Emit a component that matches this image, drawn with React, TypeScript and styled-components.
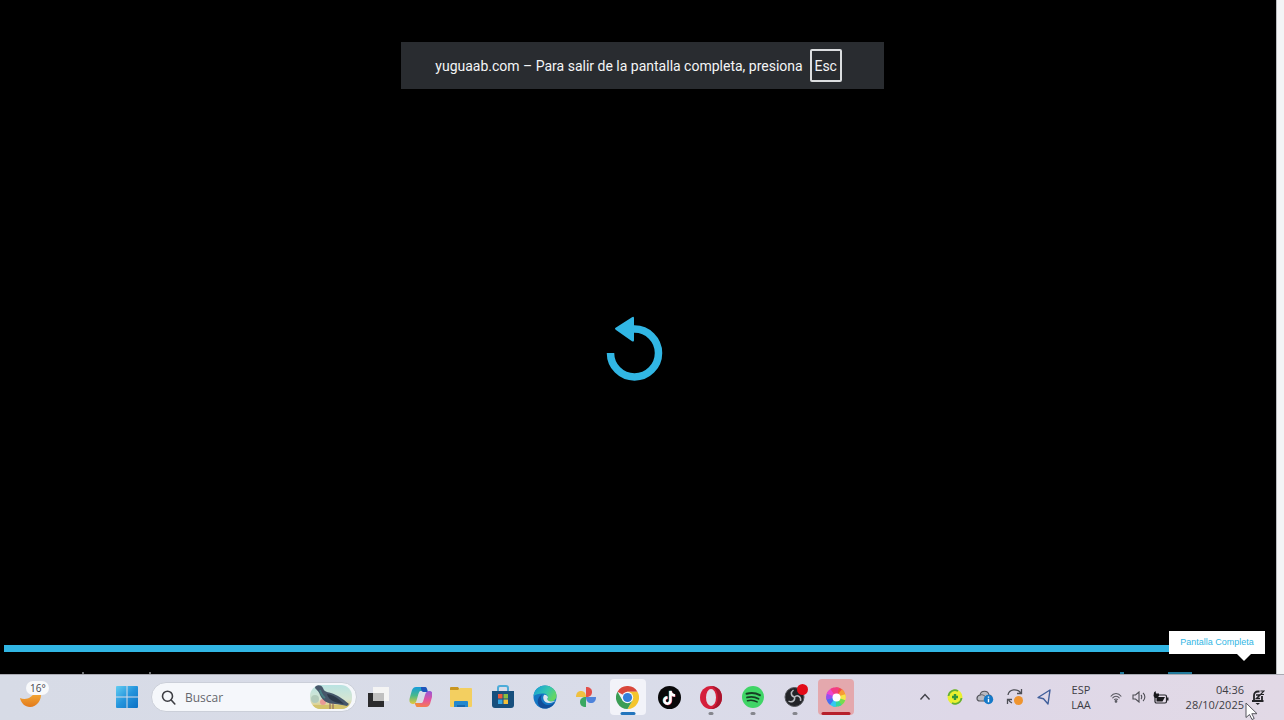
import React from "react";
import styled, { createGlobalStyle } from "styled-components";

const GlobalStyle = createGlobalStyle`
  * { box-sizing: border-box; }
  body { margin: 0; background: #000; overflow: hidden; font-family: "Open Sans", "Noto Sans", sans-serif; }
  button { border: 0; padding: 0; background: none; font: inherit; color: inherit; cursor: pointer; }
  svg { display: block; }
`;

const accent = "#31b6e4";

const Screen = styled.div`
  position: relative;
  display: flex;
  flex-direction: column;
  height: 100vh;
`;

const Stage = styled.main`
  flex: 1;
  min-height: 0;
  display: flex;
`;

const Gutter = styled.div`
  width: 8px;
  background: #f3f4f6;
  border-left: 1px solid #b9bbbf;
`;

const Player = styled.section`
  flex: 1;
  display: flex;
  flex-direction: column;
  align-items: center;
  background: #000;
`;

const Notice = styled.div`
  display: flex;
  align-items: center;
  justify-content: center;
  gap: 7px;
  width: 483px;
  height: 47px;
  margin: 42px 0 0 8px;
  padding-right: 7px;
  background: #292c30;
  color: #f4f5f6;
  font-family: Roboto, "Open Sans", sans-serif;
  font-size: 14px;
  line-height: 20px;
  white-space: nowrap;
`;

const Key = styled.kbd`
  display: grid;
  place-items: center;
  width: 32px;
  height: 33px;
  border: 2px solid #dcdee0;
  border-radius: 2px;
  font: inherit;
`;

const Center = styled.div`
  flex: 1;
  display: grid;
  place-items: center;
  padding-bottom: 36px;
`;

const Timeline = styled.div`
  position: relative;
  align-self: stretch;
  padding-left: 4px;
  margin-bottom: 20px;
`;

const Progress = styled.div`
  height: 7px;
  background: ${accent};
  margin-right: 104px;
`;

const Tooltip = styled.div`
  position: absolute;
  right: 11px;
  bottom: -2px;
  width: 96px;
  height: 23px;
  background: #fff;
  color: ${accent};
  font: 9px/22px "Liberation Sans", Arial, sans-serif;
  text-align: center;
  white-space: nowrap;
  &::after {
    content: "";
    position: absolute;
    top: 100%;
    right: 14px;
    border: 7px solid transparent;
    border-top-color: #fff;
    border-bottom: 0;
  }
`;

const ControlsEdge = styled.div`
  align-self: stretch;
  display: flex;
  justify-content: space-between;
  height: 2px;
  padding: 0 84px 0 82px;
`;

const EdgeGroup = styled.div<{ $gap: number }>`
  display: flex;
  gap: ${(p) => p.$gap}px;
`;

const EdgeMark = styled.span<{ $w: number; $c: string }>`
  width: ${(p) => p.$w}px;
  background: ${(p) => p.$c};
`;

const Taskbar = styled.footer`
  display: flex;
  align-items: center;
  height: 46px;
  padding: 0 12px 1px 16px;
  border-top: 1px solid #a9aab2;
  background: linear-gradient(90deg, #d7dbe6 0%, #d9dce9 50%, #ded8e8 75%, #e2d9e6 100%);
  color: #3d3d44;
  font-size: 11px;
  line-height: 15px;
`;

const Weather = styled.button`
  width: 36px;
  height: 36px;
  margin-right: 54px;
`;

const StartButton = styled.button`
  display: grid;
  place-items: center;
  width: 42px;
  height: 36px;
  margin-right: 3px;
`;

const Search = styled.label`
  display: flex;
  align-items: center;
  gap: 9px;
  width: 206px;
  height: 30px;
  padding: 0 4px 0 9px;
  border: 1px solid #cbcfd9;
  border-radius: 15px;
  background: #f5f7fb;
`;

const SearchInput = styled.input`
  flex: 1;
  min-width: 0;
  border: 0;
  padding: 0;
  outline: 0;
  background: none;
  font: inherit;
  font-size: 12px;
  &::placeholder { color: #66676d; opacity: 1; }
`;

const Apps = styled.nav`
  display: flex;
  width: 500px;
`;

const AppSlot = styled.div`
  flex: 1;
  display: flex;
  justify-content: center;
`;

type Run = "none" | "idle" | "active" | "alert";
const tile: Record<Run, string> = { none: "none", idle: "none", active: "#f2f3f9", alert: "#e4a8ad" };
const mark: Record<Run, string> = { none: "transparent", idle: "#85868d", active: "#2375bd", alert: "#b71f2b" };
const markWidth: Record<Run, number> = { none: 0, idle: 5, active: 15, alert: 29 };

const AppButton = styled.button<{ $run: Run }>`
  position: relative;
  display: grid;
  place-items: center;
  width: 36px;
  height: 36px;
  border-radius: 4px;
  background: ${(p) => tile[p.$run]};
  &::after {
    content: "";
    position: absolute;
    bottom: 0;
    left: 50%;
    transform: translateX(-50%);
    width: ${(p) => markWidth[p.$run]}px;
    height: 3px;
    border-radius: 2px;
    background: ${(p) => mark[p.$run]};
  }
`;

const Tray = styled.div`
  display: flex;
  align-items: center;
  margin-left: auto;
`;

const TrayButton = styled.button<{ $w: number }>`
  display: grid;
  place-items: center;
  width: ${(p) => p.$w}px;
  height: 36px;
`;

const TrayText = styled.button<{ $w: number; $align: string }>`
  width: ${(p) => p.$w}px;
  text-align: ${(p) => p.$align};
  white-space: nowrap;
`;

const Cursor = styled.svg`
  position: absolute;
  right: 26px;
  bottom: 0;
`;

const ReplayIcon = () => (
  <svg width="64" height="66" viewBox="0 0 64 66">
    <path d="M4.5 37a24 24 0 1 0 24-24h-4" fill="none" stroke={accent} strokeWidth="7.5" />
    <path d="M10 11.5 26 1.2q2-1 2 1v22q0 2-2 1L10 14q-2-1.300 0-2.500Z" fill={accent} />
  </svg>
);

const WeatherIcon = () => (
  <svg width="36" height="36" viewBox="0 0 36 36">
    <defs>
      <linearGradient id="moon" x1="0" y1="0" x2="0" y2="1">
        <stop offset="0" stopColor="#f7b13c" /><stop offset="1" stopColor="#e27a1b" />
      </linearGradient>
    </defs>
    <path d="M4 19c5 2 12 1 15-7l6 1c1 8-4 15-11 15-5 0-9-4-10-9Z" fill="url(#moon)" />
    <rect x="10" y="2" width="23" height="14" rx="7" fill="#f8f9fb" />
    <text x="14" y="13" fontSize="10" fill="#44454b" fontFamily="Open Sans, sans-serif">16°</text>
  </svg>
);

const WindowsIcon = () => (
  <svg width="22" height="22" viewBox="0 0 22 22">
    <defs>
      <linearGradient id="win" x1="0" y1="0" x2="22" y2="22" gradientUnits="userSpaceOnUse">
        <stop offset="0" stopColor="#62cdf2" /><stop offset=".5" stopColor="#2494dc" /><stop offset="1" stopColor="#0b70c4" />
      </linearGradient>
    </defs>
    <path fill="url(#win)" d="M0 1q0-1 1-1h9.500v10.500H0ZM11.500 0H21q1 0 1 1v9.500H11.500ZM0 11.500h10.500V22H1q-1 0-1-1ZM11.500 11.500H22V21q0 1-1 1h-9.500Z" />
  </svg>
);

const SearchIcon = () => (
  <svg width="15" height="15" viewBox="0 0 15 15" fill="none" stroke="#3d3e44" strokeWidth="1.600" strokeLinecap="round">
    <circle cx="6.500" cy="6.200" r="5" /><path d="m10.200 10 3.600 4" />
  </svg>
);

const PigeonIcon = () => (
  <svg width="42" height="24" viewBox="0 0 42 24">
    <defs>
      <linearGradient id="sky" x1="0" y1="0" x2="0" y2="1">
        <stop offset="0" stopColor="#b9e3e2" /><stop offset=".6" stopColor="#d5e5d2" /><stop offset=".85" stopColor="#dfcf8b" /><stop offset="1" stopColor="#b9c969" />
      </linearGradient>
      <clipPath id="pill"><rect width="42" height="24" rx="11" /></clipPath>
    </defs>
    <g clipPath="url(#pill)">
      <rect width="42" height="24" fill="url(#sky)" />
      <circle cx="13" cy="17" r="3" fill="#e99b96" /><circle cx="5" cy="14" r="4" fill="#b2cbbb" />
      <path d="M0 20h42v4H0Z" fill="#d4c36c" />
    </g>
    <path d="M5 3c0-3 6-4 8 0 1 3 3 4 8 5 6 2 11 5 18 11l-2 2c-5-1-8-2-12-2-8 0-13-4-15-9-1-3-2-4-5-7Z" fill="#46576a" />
    <path d="M17 9c7 1 12 5 17 10-8-1-15-3-17-10Z" fill="#2c3848" />
    <path d="M10 5c1 4 2 6 5 8" stroke="#467f83" strokeWidth="2" fill="none" />
    <path d="M20 18v6M23 18v6" stroke="#805b5b" strokeWidth="1" />
  </svg>
);

const TaskViewIcon = () => (
  <svg width="22" height="22" viewBox="0 0 22 22">
    <path d="M1 7h16v14H1Z" fill="#2b2b2d" /><path d="M6 1h16v14H6Z" fill="#f4f4f4" /><path d="M6 7h11v8H6Z" fill="#c0c0c0" />
  </svg>
);

const CopilotIcon = () => (
  <svg width="24" height="24" viewBox="0 0 24 24">
    <defs>
      <linearGradient id="cpa" x1="0" y1="0" x2="0" y2="1">
        <stop offset="0" stopColor="#159cdb" /><stop offset=".5" stopColor="#48b98b" /><stop offset="1" stopColor="#e6ca38" />
      </linearGradient>
      <linearGradient id="cpb" x1="0" y1="0" x2="0" y2="1">
        <stop offset="0" stopColor="#9659d9" /><stop offset=".55" stopColor="#e3539e" /><stop offset="1" stopColor="#f67952" />
      </linearGradient>
    </defs>
    <g transform="translate(1 0)">
      <path d="M7 2h8c2 0 2 1 3 4H12c-2 0-2 1-4 8-1 4-2 5-4 5-4 0-4-4-3-7l2-7c1-2 2-3 4-3Z" fill="url(#cpa)" />
      <path d="M12 2h4c2 0 2 2 3 5h-4c-2 0-3-1-3-5Z" fill="#1d55bc" />
      <path d="M17 22H9c-2 0-2-1-3-4h6c2 0 2-1 4-8 1-3 2-4 4-4 4 0 4 3 3 6l-2 7c-1 2-2 3-4 3Z" fill="url(#cpb)" />
      <path d="M6 18h5c-1 2 0 4 2 4H9c-2 0-2-1-3-4Z" fill="#f18a3e" />
    </g>
  </svg>
);

const FolderIcon = () => (
  <svg width="24" height="22" viewBox="0 0 24 22">
    <path d="M1 2q0-1 1-1h7l2 3H1Z" fill="#c99620" />
    <path d="M1 4h8l2-2h11q1 0 1 1v17q0 1-1 1H2q-1 0-1-1Z" fill="#f3cf60" />
    <path d="M5 16q0-1 1-1h12q1 0 1 1v5H5Z" fill="#2388ce" /><path d="M8 19h8v2H8Z" fill="#1767ac" />
  </svg>
);

const StoreIcon = () => (
  <svg width="22" height="24" viewBox="0 0 22 24">
    <path d="M6 7V3q0-2 2-2h6q2 0 2 2v4" fill="none" stroke="#4dacd9" strokeWidth="2" />
    <path d="M0 6h22v14q0 3-3 3H3q-3 0-3-3Z" fill="#174f7d" />
    <path d="M6 9h4.500v4.500H6Z" fill="#ec5a3c" /><path d="M11.500 9H16v4.500h-4.500Z" fill="#87bd40" />
    <path d="M6 14.500h4.500V19H6Z" fill="#35a6e3" /><path d="M11.500 14.500H16V19h-4.500Z" fill="#f5c138" />
  </svg>
);

const EdgeIcon = () => (
  <svg width="24" height="24" viewBox="0 0 24 24">
    <defs>
      <linearGradient id="edg" x1="0" y1="0" x2="1" y2="0.500">
        <stop offset="0" stopColor="#159bdb" /><stop offset=".6" stopColor="#34c6b0" /><stop offset="1" stopColor="#65d663" />
      </linearGradient>
    </defs>
    <circle cx="12" cy="12" r="11.500" fill="#1477c5" />
    <path d="M.6 11C1 5 6 .5 12 .5S23.500 5 23.500 10.500c0 4-3 6-6 6-3 0-4-1-3-3 1-3-1-5-5-5-4 0-7 1-8.900 2.500Z" fill="url(#edg)" />
    <path d="M9.500 9C6 13 9 20 15 20c3 0 5-1 7-3-2 4-6 6.500-10 6.500-6 0-8-5-7-9 .6-2 2-4 4.500-5.500Z" fill="#124d99" />
    <path d="M11 10c-2 3 0 8 5 8 3 0 5-1 6.500-2.500-3 1.500-6 1.200-7.500 0-1-1-1-2 0-3-.5-2-2.500-3-4-2.500Z" fill="#dce6ef" />
  </svg>
);

const PhotosIcon = () => (
  <svg width="22" height="22" viewBox="0 0 22 22">
    <path d="M11 11V1c4 0 6 2 6 5s-2 5-6 5Z" fill="#e34e48" />
    <path d="M11 11h10c0 4-2 6-5 6s-5-2-5-6Z" fill="#4e83db" />
    <path d="M11 11v10c-4 0-6-2-6-5s2-5 6-5Z" fill="#3aa862" />
    <path d="M11 11H1c0-4 2-6 5-6s5 2 5 6Z" fill="#efc040" />
  </svg>
);

const ChromeIcon = () => (
  <svg width="23" height="23" viewBox="0 0 24 24">
    <path d="M12 12 1.600 6A12 12 0 0 1 22.400 6H12Z" fill="#d9473b" />
    <path d="M22.400 6A12 12 0 0 1 12 24l5.200-9L12 6Z" fill="#f4c52d" />
    <path d="M12 24A12 12 0 0 1 1.600 6l5.200 9 10.400 0Z" fill="#3b9d55" />
    <circle cx="12" cy="12" r="6" fill="#f7f8fa" /><circle cx="12" cy="12" r="4.800" fill="#347fda" />
  </svg>
);

const TikTokIcon = () => (
  <svg width="23" height="23" viewBox="0 0 24 24">
    <circle cx="12" cy="12" r="12" fill="#080809" />
    <g fill="none" strokeWidth="2.600">
      <path d="M12.500 5v10a3.200 3.200 0 1 1-3.200-3.200M12.500 5c.3 3 2 4.500 4.700 4.700" stroke="#42cfd2" />
      <path d="M13.500 5.500v10a3.200 3.200 0 1 1-3.200-3.200M13.500 5.500c.3 3 2 4.500 4.700 4.700" stroke="#e04a69" />
      <path d="M13 5.200v10A3.200 3.200 0 1 1 9.800 12M13 5.200c.3 3 2 4.500 4.700 4.700" stroke="#fff" />
    </g>
  </svg>
);

const OperaIcon = () => (
  <svg width="22" height="23" viewBox="0 0 22 23">
    <ellipse cx="11" cy="11.500" rx="11" ry="11.500" fill="#d51f3b" />
    <path d="M11 0C18 0 22 5 22 11.500S18 23 11 23c9-3 9-20 0-23Z" fill="#a9142d" />
    <ellipse cx="11" cy="11.500" rx="5" ry="8.500" fill="#dfdfea" />
  </svg>
);

const SpotifyIcon = () => (
  <svg width="22" height="22" viewBox="0 0 24 24">
    <circle cx="12" cy="12" r="12" fill="#3fd566" />
    <g fill="none" stroke="#163e24" strokeLinecap="round">
      <path d="M5 8.500c5-1.500 10-1 14.500 1.500" strokeWidth="2.300" />
      <path d="M5.500 12.500c4.500-1.300 8.500-.8 12.500 1.400" strokeWidth="2" />
      <path d="M6 16c4-1 7.300-.5 10.500 1.300" strokeWidth="1.700" />
    </g>
  </svg>
);

const ObsIcon = () => (
  <svg width="26" height="26" viewBox="0 0 26 26">
    <circle cx="12.500" cy="13" r="9.500" fill="#222327" stroke="#55565b" />
    <g fill="none" stroke="#bbbcc1" strokeWidth="1.500">
      <path d="M12.500 13c-4-1-4-5-1-7" /><path d="M12.500 13c3-3 7 0 6 4" /><path d="M12.500 13c1 4-3 6-6 4" />
    </g>
    <circle cx="20.500" cy="5.500" r="5.500" fill="#e20b18" />
  </svg>
);

const wheel = ["#f34a45", "#f79b35", "#f6e64a", "#77dc4f", "#36d79a", "#35c8f2", "#496ef0", "#9a4cf0", "#ed45cd", "#f33d82"];
const ColorWheelIcon = () => (
  <svg width="22" height="22" viewBox="0 0 22 22">
    {wheel.map((color, i) => (
      <path key={color} d="M11 11 7 2A10 10 0 0 1 16.500 3Q13 5 14 9Z" fill={color} transform={`rotate(${i * 36 + 25} 11 11)`} />
    ))}
    <circle cx="11.500" cy="11.500" r="4" fill="#fff" />
  </svg>
);

const ChevronIcon = () => (
  <svg width="12" height="8" viewBox="0 0 12 8" fill="none" stroke="#424249" strokeWidth="1.400"><path d="m1.500 6.500 4.500-5 4.500 5" /></svg>
);
const GreenBadgeIcon = () => (
  <svg width="16" height="16" viewBox="0 0 16 16">
    <circle cx="8" cy="8" r="7.500" fill="#eaf02f" />
    <path d="M1.500 7A6.500 6.500 0 0 1 11 2M14.500 9A6.500 6.500 0 0 1 5 14" fill="none" stroke="#62ae3b" strokeWidth="1.800" />
    <path d="M8 5v6M5 8h6" stroke="#32953c" strokeWidth="2.400" />
  </svg>
);
const CloudIcon = () => (
  <svg width="18" height="16" viewBox="0 0 18 16">
    <path d="M4 12C0 12 0 7 4 6c1-5 8-5 9 0 3 0 4 5 1 6Z" fill="#b9bac2" stroke="#55565d" strokeWidth="1.200" />
    <path d="M4 6c3-1 5 1 8 4" stroke="#64656c" fill="none" />
    <circle cx="12.500" cy="10.500" r="4.700" fill="#1579c9" /><path d="M12.500 7.500v1.300M12.500 9.800v3.500" stroke="#fff" strokeWidth="1.400" />
  </svg>
);
const SyncIcon = () => (
  <svg width="18" height="18" viewBox="0 0 18 18" fill="none" stroke="#4d4e55" strokeWidth="1.300">
    <path d="M2 7c1-6 9-7 13-2M15.500 1v4.500H11M6 15c-2-1-3-2-4-4M1.500 16v-4.500H6" />
    <circle cx="12.500" cy="12.500" r="4.500" fill="#ef942f" stroke="none" />
  </svg>
);
const LocationIcon = () => (
  <svg width="15" height="16" viewBox="0 0 15 16" fill="none" stroke="#405f9b" strokeWidth="1.400" strokeLinejoin="round"><path d="M13 1 1 8.500l5.500 1.300L11 15Z" /></svg>
);
const WifiIcon = () => (
  <svg width="12" height="11" viewBox="0 0 12 11" fill="none" stroke="#5a5a62" strokeWidth="1.100">
    <path d="M.7 4.500c3-4 7.600-4 10.600 0M2.400 6.300c2-2.800 5.200-2.800 7.200 0M4.200 8c1-1.400 2.600-1.400 3.600 0" /><circle cx="6" cy="9.400" r=".8" fill="#5a5a62" />
  </svg>
);
const VolumeIcon = () => (
  <svg width="14" height="12" viewBox="0 0 14 12" fill="none" stroke="#4d4d54" strokeWidth="1.100"><path d="M1 4h2.500L7 1v10L3.500 8H1ZM9 4c1 1 1 3 0 4M11 2c2.500 2 2.500 6 0 8" /></svg>
);
const BatteryIcon = () => (
  <svg width="16" height="13" viewBox="0 0 16 13">
    <rect x="2" y="4" width="11.500" height="8" rx="1.500" fill="#e6deeb" stroke="#25252a" strokeWidth="1.200" />
    <path d="M3.500 6H12L9.500 10.500h-6Z" fill="#18181b" />
    <path d="M14 6.500h1.500v3H14Z" fill="#25252a" />
    <path d="M1 1.500 2.500 0l.5 2.500h3V5L4 7H2L.5 5Z" fill="#18181b" />
  </svg>
);
const BellIcon = () => (
  <svg width="14" height="15" viewBox="0 0 14 15">
    <path d="M3 10V5.500C3 3 4.500 1.500 7 1.500h1.500M11 6v4M1 11h11.500" fill="none" stroke="#232326" strokeWidth="1.800" />
    <path d="M4.500 13h4.500l-2.200 2Z" fill="#232326" />
    <path d="M9.500 1H13L9.500 4.500H13" fill="none" stroke="#232326" strokeWidth="1.100" />
    <path d="M5 5h4L5.500 8.500H9" fill="none" stroke="#232326" strokeWidth="1.500" />
  </svg>
);

const apps: { name: string; icon: React.ReactNode; run: Run }[] = [
  { name: "Vista de tareas", icon: <TaskViewIcon />, run: "none" },
  { name: "Copilot", icon: <CopilotIcon />, run: "none" },
  { name: "Explorador de archivos", icon: <FolderIcon />, run: "none" },
  { name: "Microsoft Store", icon: <StoreIcon />, run: "none" },
  { name: "Edge", icon: <EdgeIcon />, run: "none" },
  { name: "Google Fotos", icon: <PhotosIcon />, run: "none" },
  { name: "Chrome", icon: <ChromeIcon />, run: "active" },
  { name: "TikTok", icon: <TikTokIcon />, run: "none" },
  { name: "Opera", icon: <OperaIcon />, run: "idle" },
  { name: "Spotify", icon: <SpotifyIcon />, run: "idle" },
  { name: "OBS Studio", icon: <ObsIcon />, run: "idle" },
  { name: "Grabador", icon: <ColorWheelIcon />, run: "alert" },
];

export default function App() {
  return (
    <Screen>
      <GlobalStyle />
      <Stage>
        <Player>
          <Notice>
            <span>yuguaab.com – Para salir de la pantalla completa, presiona</span>
            <Key>Esc</Key>
          </Notice>
          <Center>
            <button aria-label="Reproducir de nuevo"><ReplayIcon /></button>
          </Center>
          <Timeline>
            <Progress />
            <Tooltip role="tooltip">Pantalla Completa</Tooltip>
          </Timeline>
          <ControlsEdge>
            <EdgeGroup $gap={65}>
              <EdgeMark $w={2} $c="#6b6d70" />
              <EdgeMark $w={2} $c="#6b6d70" />
            </EdgeGroup>
            <EdgeGroup $gap={44}>
              <EdgeMark $w={4} $c="#20789a" />
              <EdgeMark $w={24} $c="#20789a" />
            </EdgeGroup>
          </ControlsEdge>
        </Player>
        <Gutter />
      </Stage>
      <Taskbar>
        <Weather aria-label="Clima"><WeatherIcon /></Weather>
        <StartButton aria-label="Inicio"><WindowsIcon /></StartButton>
        <Search>
          <SearchIcon />
          <SearchInput type="text" placeholder="Buscar" aria-label="Buscar" />
          <PigeonIcon />
        </Search>
        <Apps>
          {apps.map((a) => (
            <AppSlot key={a.name}>
              <AppButton $run={a.run} aria-label={a.name}>{a.icon}</AppButton>
            </AppSlot>
          ))}
        </Apps>
        <Tray>
          <TrayButton $w={30} aria-label="Mostrar iconos ocultos"><ChevronIcon /></TrayButton>
          <TrayButton $w={30} aria-label="Antivirus"><GreenBadgeIcon /></TrayButton>
          <TrayButton $w={30} aria-label="OneDrive"><CloudIcon /></TrayButton>
          <TrayButton $w={30} aria-label="Actualizaciones"><SyncIcon /></TrayButton>
          <TrayButton $w={28} aria-label="Ubicación"><LocationIcon /></TrayButton>
          <TrayText $w={46} $align="center">ESP<br />LAA</TrayText>
          <TrayButton $w={24} aria-label="Wi-Fi"><WifiIcon /></TrayButton>
          <TrayButton $w={22} aria-label="Volumen"><VolumeIcon /></TrayButton>
          <TrayButton $w={22} aria-label="Batería"><BatteryIcon /></TrayButton>
          <TrayText $w={72} $align="right">04:36<br />28/10/2025</TrayText>
          <TrayButton $w={28} aria-label="Notificaciones"><BellIcon /></TrayButton>
        </Tray>
      </Taskbar>
      <Cursor width="13" height="18" viewBox="0 0 13 18">
        <path d="M1 1v14.500l3.500-3 2.500 5 2.200-1-2.400-4.800H12Z" fill="#fff" stroke="#55555c" strokeWidth="1" />
      </Cursor>
    </Screen>
  );
}
